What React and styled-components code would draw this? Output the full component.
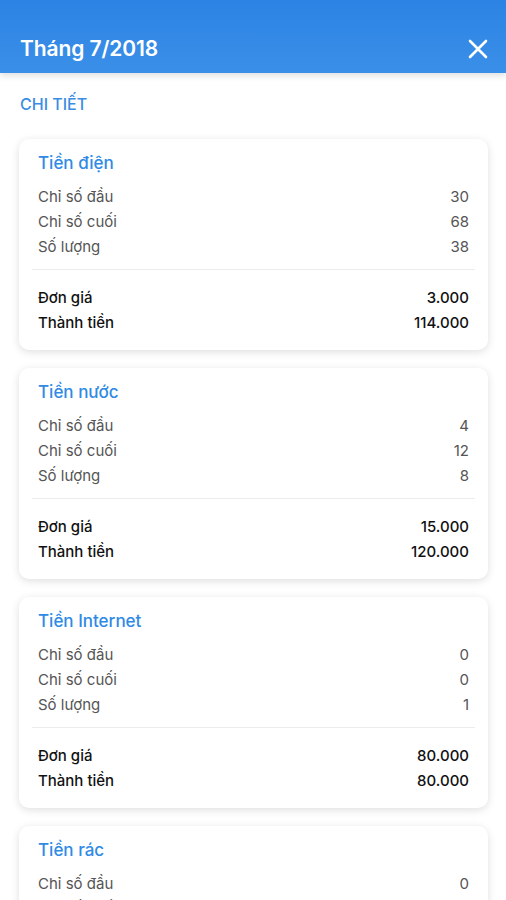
import React from "react";
import styled, { createGlobalStyle } from "styled-components";

const Global = createGlobalStyle`
  html, body { margin: 0; padding: 0; background: #fff; }
  body { font-family: Inter, Roboto, "Noto Sans", "Liberation Sans", sans-serif; -webkit-font-smoothing: antialiased; }
  * { box-sizing: border-box; }
`;

const Page = styled.div`
  width: 506px;
  height: 900px;
  overflow: hidden;
  background: #fff;
`;

const Header = styled.header`
  height: 73px;
  background: linear-gradient(#2c83e3, #3a8fe8);
  display: flex;
  align-items: center;
  justify-content: space-between;
  padding: 24px 16px 0 20px;
  box-shadow: 0 3px 6px rgba(0, 0, 0, 0.12);
  position: relative;
  z-index: 1;
`;

const Title = styled.h1`
  margin: 0;
  font-size: 21px;
  font-weight: 600;
  color: #fff;
  letter-spacing: -0.1px;
`;

const CloseBtn = styled.button`
  border: none;
  background: none;
  padding: 0;
  width: 24px;
  height: 24px;
  display: flex;
  align-items: center;
  justify-content: center;
`;

const Section = styled.div`
  padding: 19px 18px 0 19px;
`;

const SectionTitle = styled.div`
  font-size: 16px;
  font-weight: 500;
  color: #3a8de2;
  padding-left: 1px;
  margin-bottom: 23px;
  line-height: 24px;
`;

const Cards = styled.div`
  display: flex;
  flex-direction: column;
  gap: 18px;
`;

const Card = styled.div`
  border-radius: 10px;
  background: #fff;
  box-shadow: 0 2px 8px rgba(0, 0, 0, 0.13);
  padding: 12px 19px 15px 19px;
  height: 211px;
`;

const CardTitle = styled.div`
  font-size: 17px;
  line-height: 24px;
  font-weight: 500;
  color: #2f8ae5;
  margin-bottom: 9px;
`;

const Row = styled.div`
  display: flex;
  justify-content: space-between;
  align-items: center;
  height: 25px;
  font-size: 15px;
  color: ${(p) => (p.$strong ? "#111" : "#555")};
  font-weight: ${(p) => (p.$strong ? 550 : 400)};
`;

const Divider = styled.div`
  height: 1px;
  background: #ececec;
  margin: 10px -6px 15px -6px;
`;

const data = [
  { name: "Tiền điện", a: "30", b: "68", q: "38", p: "3.000", t: "114.000" },
  { name: "Tiền nước", a: "4", b: "12", q: "8", p: "15.000", t: "120.000" },
  { name: "Tiền Internet", a: "0", b: "0", q: "1", p: "80.000", t: "80.000" },
  { name: "Tiền rác", a: "0", b: "0", q: "1", p: "20.000", t: "20.000" },
];

export default function App() {
  return (
    <Page>
      <Global />
      <Header>
        <Title>Tháng 7/2018</Title>
        <CloseBtn aria-label="close">
          <svg width="20" height="20" viewBox="0 0 20 20">
            <path d="M2 2 L18 18 M18 2 L2 18" stroke="#fff" strokeWidth="2.6" strokeLinecap="round" />
          </svg>
        </CloseBtn>
      </Header>
      <Section>
        <SectionTitle>CHI TIẾT</SectionTitle>
        <Cards>
          {data.map((d) => (
            <Card key={d.name}>
              <CardTitle>{d.name}</CardTitle>
              <Row><span>Chỉ số đầu</span><span>{d.a}</span></Row>
              <Row><span>Chỉ số cuối</span><span>{d.b}</span></Row>
              <Row><span>Số lượng</span><span>{d.q}</span></Row>
              <Divider />
              <Row $strong><span>Đơn giá</span><span>{d.p}</span></Row>
              <Row $strong><span>Thành tiền</span><span>{d.t}</span></Row>
            </Card>
          ))}
        </Cards>
      </Section>
    </Page>
  );
}
